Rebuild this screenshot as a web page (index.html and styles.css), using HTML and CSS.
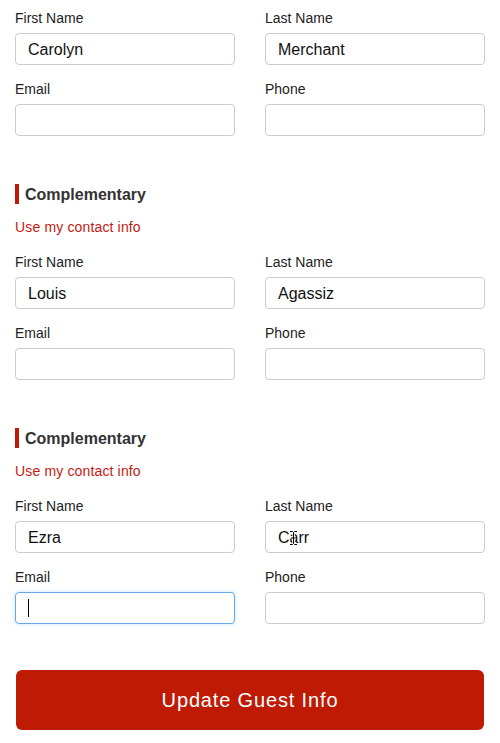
FILE: index.html
```html
<!DOCTYPE html>
<html lang="en">
<head>
    <meta charset="UTF-8">
    <meta name="viewport" content="width=device-width, initial-scale=1.0">
    <title>Guest Info</title>
    <link rel="stylesheet" href="styles.css">
</head>
<body>
    <div class="container">
        <div class="guest">
            <div class="fields">
                <div class="field">
                    <label>First Name</label>
                    <input type="text" value="Carolyn">
                </div>
                <div class="field">
                    <label>Last Name</label>
                    <input type="text" value="Merchant">
                </div>
                <div class="field">
                    <label>Email</label>
                    <input type="text">
                </div>
                <div class="field">
                    <label>Phone</label>
                    <input type="text">
                </div>
            </div>
        </div>

        <div class="guest">
            <h2 class="guest-title">Complementary</h2>
            <a class="contact-link" href="#">Use my contact info</a>
            <div class="fields">
                <div class="field">
                    <label>First Name</label>
                    <input type="text" value="Louis">
                </div>
                <div class="field">
                    <label>Last Name</label>
                    <input type="text" value="Agassiz">
                </div>
                <div class="field">
                    <label>Email</label>
                    <input type="text">
                </div>
                <div class="field">
                    <label>Phone</label>
                    <input type="text">
                </div>
            </div>
        </div>

        <div class="guest">
            <h2 class="guest-title">Complementary</h2>
            <a class="contact-link" href="#">Use my contact info</a>
            <div class="fields">
                <div class="field">
                    <label>First Name</label>
                    <input type="text" value="Ezra">
                </div>
                <div class="field">
                    <label>Last Name</label>
                    <div class="input-wrap">
                        <input type="text" value="Carr">
                        <!-- mouse pointer hovering the field -->
                        <svg class="pointer" width="9" height="16" viewBox="0 0 9 16">
                            <path d="M1 1.5h2.5l1 1 1-1H8M4.5 2.5v11M1 14.5h2.5l1-1 1 1H8M2.5 8h4" fill="none" stroke="#fff" stroke-width="2.4"/>
                            <path d="M1 1.5h2.5l1 1 1-1H8M4.5 2.5v11M1 14.5h2.5l1-1 1 1H8M2.5 8h4" fill="none" stroke="#000" stroke-width="1"/>
                        </svg>
                    </div>
                </div>
                <div class="field">
                    <label>Email</label>
                    <div class="input-wrap">
                        <input type="text" class="is-focus">
                        <span class="caret"></span>
                    </div>
                </div>
                <div class="field">
                    <label>Phone</label>
                    <input type="text">
                </div>
            </div>
        </div>

        <button class="submit">Update Guest Info</button>
    </div>
</body>
</html>
```

FILE: styles.css
```css
* {
    box-sizing: border-box;
}

body {
    font-family: "Liberation Sans", Arial, sans-serif;
    background-color: #fff;
    color: #333;
    margin: 0;
    padding: 0;
}

.container {
    padding: 8px 15px 0;
}

.guest {
    margin-bottom: 48px;
}

.guest:last-of-type {
    margin-bottom: 46px;
}

.guest-title {
    margin: 0;
    padding: 1px 0 0 6px;
    height: 20px;
    font-size: 16px;
    line-height: 20px;
    font-weight: bold;
    color: #333;
    border-left: 4px solid #c01a04;
}

.contact-link {
    display: block;
    margin: 13px 0 15px;
    font-size: 14px;
    line-height: 20px;
    letter-spacing: 0.15px;
    color: #c41a12;
    text-decoration: none;
}

.fields {
    display: grid;
    grid-template-columns: 1fr 1fr;
    column-gap: 30px;
    row-gap: 14px;
}

.field label {
    display: block;
    font-size: 14px;
    line-height: 20px;
    margin-bottom: 5px;
    color: #222;
}

.field input {
    display: block;
    width: 100%;
    height: 32px;
    padding: 2px 12px 0;
    border: 1px solid #ccc;
    border-radius: 4px;
    font-family: "Liberation Sans", Arial, sans-serif;
    font-size: 16px;
    color: #111;
    background: #fff;
    outline: none;
}

.field input.is-focus {
    border-color: #66a9e6;
    box-shadow: 0 0 4px rgba(102, 169, 230, 0.35);
}

.input-wrap {
    position: relative;
}

.caret {
    position: absolute;
    left: 13px;
    top: 7px;
    width: 1px;
    height: 18px;
    background: #000;
}

.pointer {
    position: absolute;
    left: 24px;
    top: 9px;
}

.submit {
    display: block;
    width: 468px;
    height: 60px;
    margin-left: 1px;
    background-color: #bf1a04;
    color: #fff;
    border: none;
    border-radius: 6px;
    font-family: "Liberation Sans", Arial, sans-serif;
    font-size: 20px;
    letter-spacing: 0.85px;
    cursor: pointer;
}
```
